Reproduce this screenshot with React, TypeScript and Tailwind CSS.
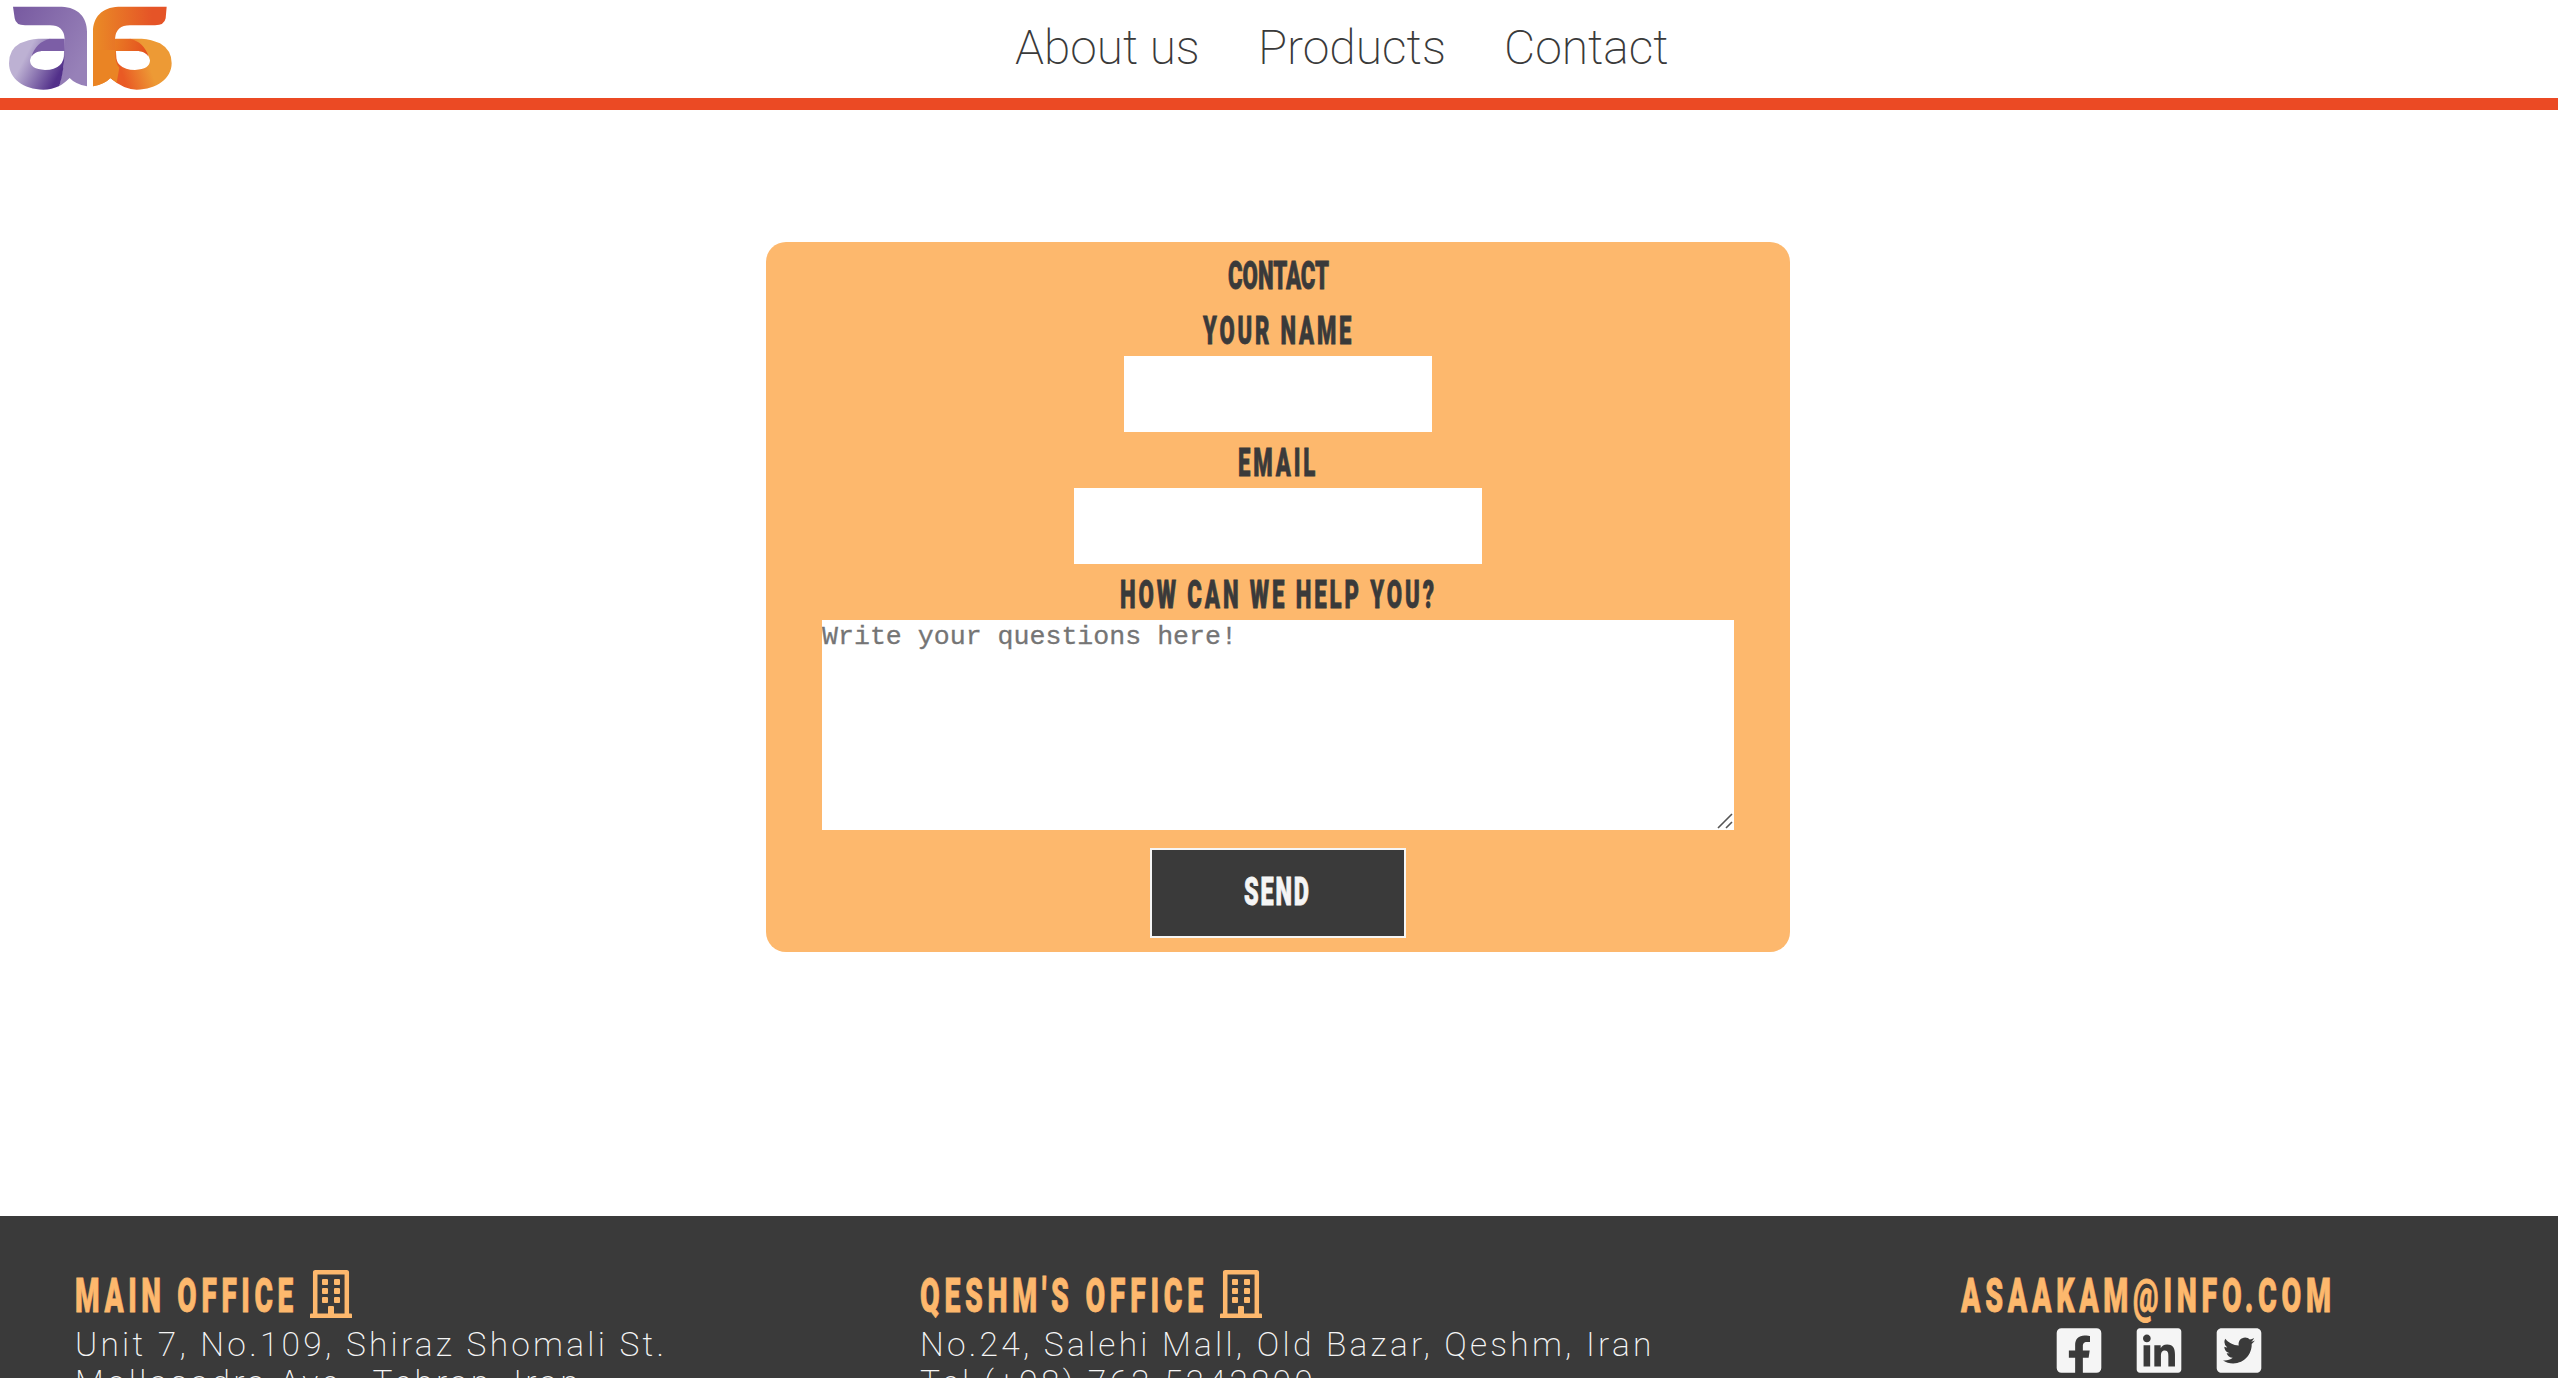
import { useLayoutEffect, useRef, type ReactNode } from "react";
import { FaRegBuilding, FaFacebookSquare, FaLinkedin, FaTwitterSquare } from "react-icons/fa";

/** Single line of text condensed or widened horizontally to a given width. */
function Fit({ width, className = "", children }: { width: number; className?: string; children: ReactNode }) {
  const ref = useRef<HTMLSpanElement>(null);
  useLayoutEffect(() => {
    const fit = () => {
      const el = ref.current;
      if (el && el.offsetWidth) el.style.transform = `scaleX(${width / el.offsetWidth})`;
    };
    fit();
    document.fonts?.ready.then(fit);
  }, [width]);
  return (
    <span className="block shrink-0" style={{ width }}>
      <span ref={ref} className={`inline-block origin-left whitespace-nowrap ${className}`}>
        {children}
      </span>
    </span>
  );
}

function Logo() {
  return (
    <svg viewBox="0 0 600 270" className="h-[90px] w-[200px] shrink-0" preserveAspectRatio="none">
      <defs>
        <linearGradient id="pTop" x1="0" y1="0" x2="1" y2="0.6">
          <stop offset="0" stopColor="#7759a0" />
          <stop offset="1" stopColor="#9781b8" />
        </linearGradient>
        <linearGradient id="pBowl" gradientUnits="userSpaceOnUse" x1="50" y1="170" x2="185" y2="240">
          <stop offset="0.15" stopColor="#bdb1d3" />
          <stop offset="0.9" stopColor="#52308a" />
        </linearGradient>
        <linearGradient id="oTop" x1="0" y1="0" x2="1" y2="0">
          <stop offset="0" stopColor="#ea8b26" />
          <stop offset="0.8" stopColor="#e55427" />
        </linearGradient>
        <linearGradient id="oBowl" gradientUnits="userSpaceOnUse" x1="360" y1="230" x2="450" y2="200">
          <stop offset="0.1" stopColor="#e95a24" />
          <stop offset="1" stopColor="#ed9a35" />
        </linearGradient>
        <linearGradient id="oBar" gradientUnits="userSpaceOnUse" x1="345" y1="130" x2="440" y2="145">
          <stop offset="0" stopColor="#e97a24" />
          <stop offset="1" stopColor="#e4501f" />
        </linearGradient>
      </defs>
      <path d="M39 20H185C235 22 261 52 261 95V259Q225 252 209 234Q190 252 178 258L190 200L194 116Q191 76 150 76H75Q47 76 44 55Z" fill="url(#pTop)" />
      <path
        fillRule="evenodd"
        d="M150 116H115Q85 118 60 130Q27 148 27 190C27 235 70 269 130 269Q155 269 178 258Q192 215 194 153L150 116ZM125 153H194Q194 210 135 210Q90 208 90 181Q92 155 125 153Z"
        fill="url(#pBowl)"
      />
      <path d="M150 116H194V153H125Q104 155 94 170Q108 126 150 116Z" fill="#7c5ea6" />
      <path d="M500 20H355C305 22 279 52 279 95V259Q315 252 331 234L355 250L345 116Q348 76 390 76H465Q493 76 497 55Z" fill="url(#oTop)" />
      <path
        fillRule="evenodd"
        d="M390 116H425Q455 118 480 130Q515 150 515 190C515 235 470 269 410 269Q370 268 331 234L345 153L390 116ZM415 153H345Q345 210 405 210Q450 208 450 181Q448 155 415 153Z"
        fill="url(#oBowl)"
      />
      <path d="M345 116H390Q432 126 446 170Q436 155 415 153H345Z" fill="url(#oBar)" />
      <path d="M279 150H345Q345 190 358 203L350 248L331 234Q315 252 279 259Z" fill="#ea8424" />
    </svg>
  );
}

const display = "font-['Roboto'] font-black [-webkit-text-stroke:0.8px_currentColor]";
const body = "font-['Roboto'] font-extralight";

export default function App() {
  return (
    <div className="flex h-[1378px] w-full flex-col overflow-hidden bg-white text-[#3a3a3a]">
      <header className="flex h-[110px] shrink-0 border-b-[12px] border-[#eb4a24]">
        <Logo />
        <nav className={`ml-[815px] flex h-[96px] items-center gap-[58px] text-[48px] leading-none ${body}`}>
          <Fit width={185}>About us</Fit>
          <Fit width={188}>Products</Fit>
          <Fit width={165}>Contact</Fit>
        </nav>
      </header>

      <main className="flex h-[1106px] shrink-0 items-start justify-center pt-[132px] pr-[2px]">
        <form className={`flex h-[710px] w-[1024px] flex-col items-center rounded-[20px] bg-[#fdb86d] text-[38.5px] leading-[56px] ${display}`}>
          <h2 className="mt-[6px] flex h-[55px]">
            <Fit width={101}>CONTACT</Fit>
          </h2>
          <label className="flex h-[53px]">
            <Fit width={151} className="tracking-[5px]">YOUR NAME</Fit>
          </label>
          <input className="h-[76px] w-[308px] bg-white" />
          <label className="flex h-[56px] pt-[3px]">
            <Fit width={80} className="tracking-[5px]">EMAIL</Fit>
          </label>
          <input className="h-[76px] w-[408px] bg-white" />
          <label className="flex h-[56px] pt-[3px]">
            <Fit width={317} className="tracking-[5px]">HOW CAN WE HELP YOU?</Fit>
          </label>
          <div className="relative h-[210px] w-[912px] bg-white">
            <textarea
              placeholder="Write your questions here!"
              className="block h-full w-full resize-none pt-px font-['Liberation_Mono'] text-[26.6px] leading-[32px] font-normal [-webkit-text-stroke:0.3px_#757575] placeholder:text-[#757575]"
            />
            <svg viewBox="0 0 16 16" className="absolute right-[1px] bottom-[1px] size-4" stroke="#555" strokeWidth="1.6">
              <path d="M1 15 15 1M9 15l6-6" />
            </svg>
          </div>
          <button type="button" className="mt-[18px] flex h-[90px] w-[256px] items-center justify-center border-2 border-[#f5f5f5] bg-[#3a3a3a] pr-[2px] pb-[2px] text-[#f5f5f5]">
            <Fit width={67} className="tracking-[3px]">SEND</Fit>
          </button>
        </form>
      </main>

      <footer className="flex h-[162px] shrink-0 overflow-hidden bg-[#3a3a3a] pt-[50px] pl-[75px] text-[#f5f5f5]">
        <section className="w-[845px] shrink-0">
          <div className={`flex h-[60px] items-center gap-[12px] text-[48px] leading-[60px] text-[#fdb86d] ${display}`}>
            <Fit width={223} className="tracking-[8px]">MAIN OFFICE</Fit>
            <FaRegBuilding className="mb-[4px] h-[48px] w-[42px]" strokeWidth={0} />
          </div>
          <div className={`text-[33px] leading-[38px] ${body}`}>
            <Fit width={592} className="tracking-[3.2px]">Unit 7, No.109, Shiraz Shomali St.</Fit>
            <Fit width={507} className="tracking-[3.2px]">Mollasadra Ave., Tehran, Iran</Fit>
          </div>
        </section>
        <section className="w-[1041px] shrink-0">
          <div className={`flex h-[60px] items-center gap-[12px] text-[48px] leading-[60px] text-[#fdb86d] ${display}`}>
            <Fit width={288} className="tracking-[8px]">QESHM'S OFFICE</Fit>
            <FaRegBuilding className="mb-[4px] h-[48px] w-[42px]" strokeWidth={0} />
          </div>
          <div className={`text-[33px] leading-[38px] ${body}`}>
            <Fit width={735} className="tracking-[3.2px]">No.24, Salehi Mall, Old Bazar, Qeshm, Iran</Fit>
            <Fit width={396} className="tracking-[3.2px]">Tel (+98) 763 5243800</Fit>
          </div>
        </section>
        <section className="flex w-[375px] shrink-0 flex-col items-center">
          <div className={`h-[60px] text-[48px] leading-[60px] text-[#fdb86d] ${display}`}>
            <Fit width={375} className="tracking-[8px]">ASAAKAM@INFO.COM</Fit>
          </div>
          <div className="-mt-px flex pl-[20px] text-[51px]">
            <FaFacebookSquare className="w-[80px]" />
            <FaLinkedin className="w-[80px]" />
            <FaTwitterSquare className="w-[80px]" />
          </div>
        </section>
      </footer>
    </div>
  );
}
